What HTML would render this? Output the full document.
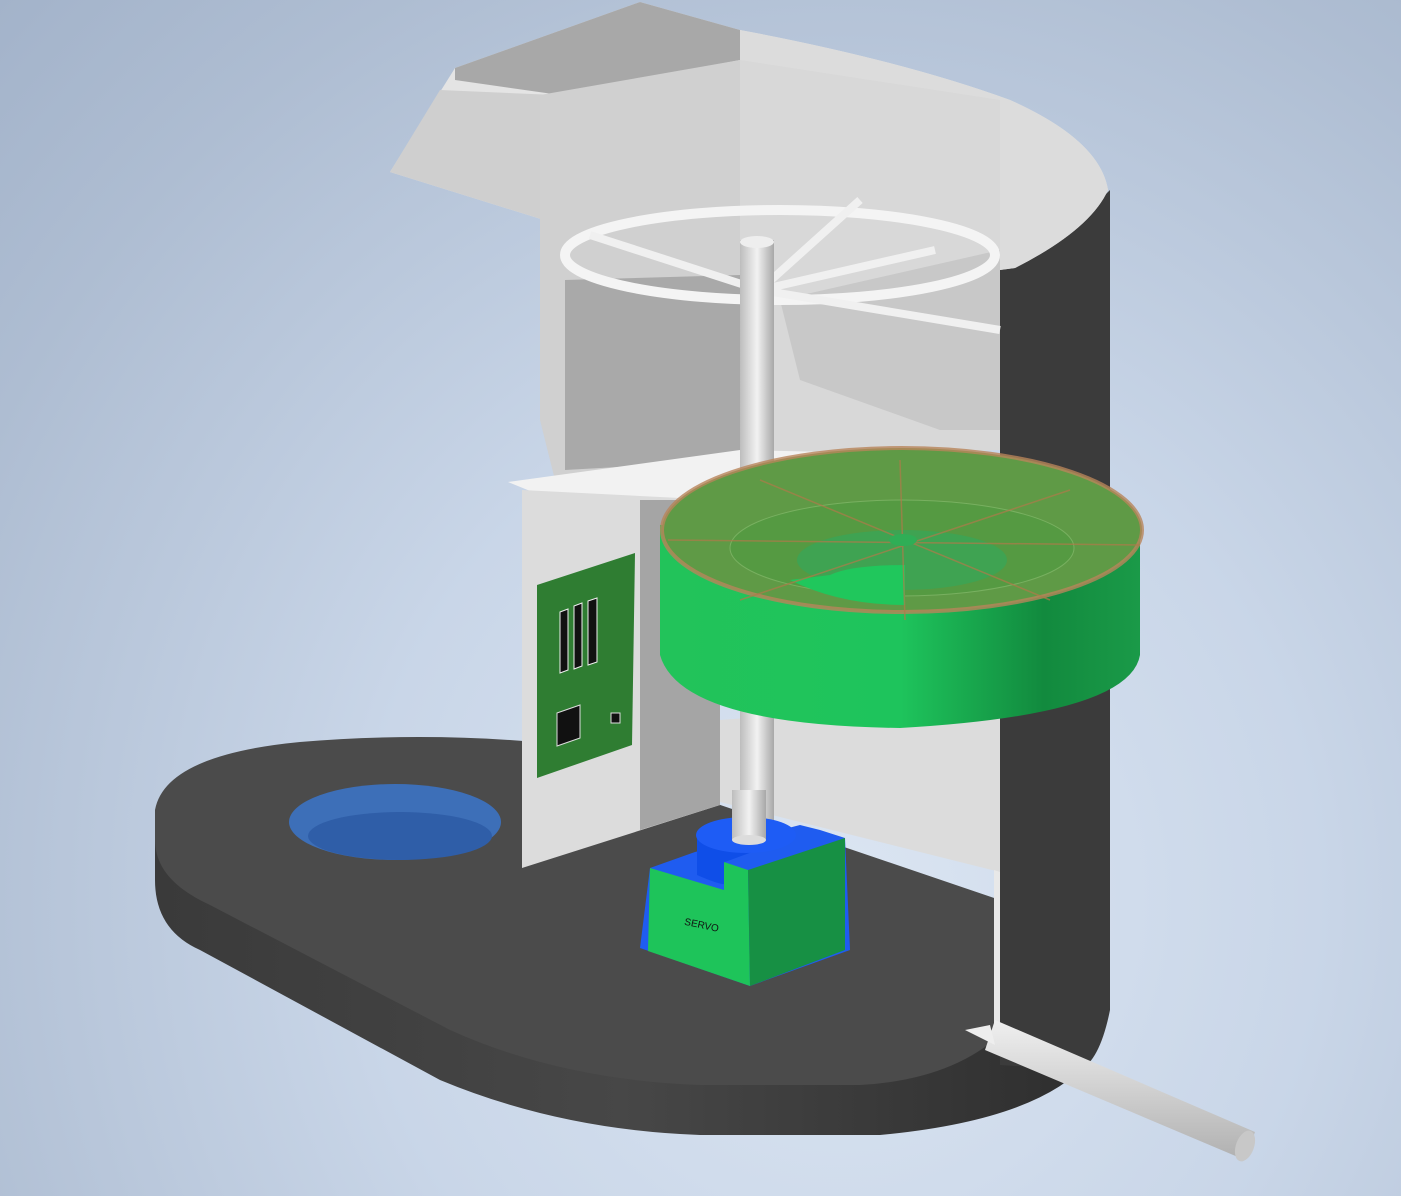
<!DOCTYPE html>
<html><head><meta charset="utf-8"><style>
html,body{margin:0;padding:0;width:1401px;height:1196px;overflow:hidden;}
body{background:radial-gradient(ellipse at 60% 75%,#dbe5f2 0%,#c9d6e8 40%,#aebdd2 80%,#a3b3ca 100%);}
svg{position:absolute;left:0;top:0}
</style></head><body>
<svg width="1401" height="1196" viewBox="0 0 1401 1196" xmlns="http://www.w3.org/2000/svg">
<defs>
<linearGradient id="grn" x1="0" x2="1"><stop offset="0" stop-color="#22c35a"/><stop offset="0.5" stop-color="#1ec45c"/><stop offset="0.8" stop-color="#128a3e"/><stop offset="1" stop-color="#1a9a48"/></linearGradient>
<linearGradient id="base" x1="0" x2="1"><stop offset="0" stop-color="#3a3a3a"/><stop offset="0.5" stop-color="#474747"/><stop offset="1" stop-color="#2e2e2e"/></linearGradient>
<linearGradient id="rod" x1="0" x2="1"><stop offset="0" stop-color="#bdbdbd"/><stop offset="0.5" stop-color="#f2f2f2"/><stop offset="1" stop-color="#a8a8a8"/></linearGradient>
<linearGradient id="pipe" x1="0" y1="0" x2="0" y2="1"><stop offset="0" stop-color="#f0f0f0"/><stop offset="1" stop-color="#b0b0b0"/></linearGradient>
</defs>
<path d="M155 815 Q160 760 300 745 Q420 735 530 745 L1090 1000 L1090 1060 Q1040 1120 880 1135 L700 1135 Q560 1130 440 1080 L200 950 Q155 930 155 880 Z" fill="url(#base)"/>
<path d="M155 810 Q165 755 300 742 Q420 732 535 742 L1000 900 L1000 1035 Q950 1080 860 1085 L700 1085 Q560 1080 450 1030 L210 905 Q155 880 155 840 Z" fill="#4b4b4b"/>
<path d="M1015 265 Q1060 240 1100 200 L1110 190 L1110 1010 Q1100 1060 1080 1070 L1000 1065 L1000 265 Z" fill="#3b3b3b"/>
<path d="M390 172 L455 68 L640 2 L740 30 Q900 60 1010 100 Q1100 140 1108 190 Q1090 230 1015 268 L1000 270 L560 225 Z" fill="#e4e4e4"/>
<path d="M740 30 Q900 60 1010 100 Q1100 140 1108 190 Q1090 230 1015 268 L1000 270 L740 240 Z" fill="#dcdcdc"/>
<path d="M455 68 L640 2 L740 30 L740 60 L560 95 L455 80 Z" fill="#a8a8a8"/>
<path d="M390 172 L440 90 L555 95 L560 225 Z" fill="#cfcfcf"/>
<path d="M540 95 L740 60 L740 470 L555 480 L540 420 Z" fill="#d0d0d0"/>
<path d="M565 280 L740 275 L740 460 L565 470 Z" fill="#a9a9a9"/>
<path d="M740 60 L1000 100 L1000 450 L740 460 Z" fill="#d8d8d8"/>
<path d="M780 300 L1000 250 L1000 430 L940 430 L800 380 Z" fill="#c8c8c8"/>
<ellipse cx="780" cy="255" rx="215" ry="45" fill="none" stroke="#f4f4f4" stroke-width="10"/>
<path d="M590 235 L760 290 L935 250 M760 290 L1000 330 M760 290 L860 200" stroke="#f0f0f0" stroke-width="8" fill="none"/>
<path d="M508 482 L740 450 L960 455 L960 470 L740 500 L540 495 Z" fill="#f2f2f2"/>
<path d="M522 490 L720 500 L720 805 L522 868 Z" fill="#dcdcdc"/>
<path d="M640 500 L720 500 L720 805 L640 830 Z" fill="#a5a5a5"/>
<!-- lower right wall -->
<path d="M720 720 L1000 700 L1000 872 L720 802 Z" fill="#dcdcdc"/>
<path d="M994 870 L1000 872 L1000 1040 L994 1040 Z" fill="#e8e8e8"/>
<path d="M537 585 L635 553 L632 745 L537 778 Z" fill="#2f7d32"/>
<path d="M560 612 L568 609 L568 670 L560 673 Z M574 606 L582 603 L582 666 L574 669 Z M588 601 L597 598 L597 662 L588 665 Z" fill="#111" stroke="#eee" stroke-width="1"/>
<path d="M557 713 L580 705 L580 738 L557 746 Z" fill="#111" stroke="#ddd" stroke-width="1"/>
<rect x="611" y="713" width="9" height="10" fill="#111" stroke="#ddd"/>
<ellipse cx="395" cy="822" rx="106" ry="38" fill="#3d6fb8"/>
<ellipse cx="400" cy="836" rx="92" ry="24" fill="#2f5ea8"/>
<rect x="740" y="240" width="34" height="600" fill="url(#rod)"/>
<ellipse cx="757" cy="242" rx="17" ry="6" fill="#eee"/>
<!-- servo -->
<path d="M640 948 L650 868 L695 852 L800 825 L820 830 L845 838 L850 950 L750 986 Z" fill="#1f5cf0"/>
<path d="M697 838 L697 875 Q720 885 725 884 L725 862 L790 838 Z" fill="#0f4ee8"/>
<ellipse cx="746" cy="835" rx="50" ry="18" fill="#1e5cf5"/>
<rect x="732" y="790" width="34" height="50" fill="url(#rod)"/>
<ellipse cx="749" cy="840" rx="17" ry="5" fill="#dcdcdc"/>
<path d="M650 868 L724 890 L724 862 L748 870 L750 986 L648 951 Z" fill="#1ec45a"/>
<path d="M748 870 L845 838 L845 950 L750 986 Z" fill="#179044"/>
<text x="684" y="928" font-family="Liberation Sans, sans-serif" font-size="10" fill="#111" transform="rotate(12 700 926)">SERVO</text>
<path d="M660 525 L660 655 Q680 725 900 728 Q1130 715 1140 655 L1140 525 Z" fill="url(#grn)"/>
<ellipse cx="902" cy="530" rx="240" ry="82" fill="#5f9a46"/>
<ellipse cx="902" cy="530" rx="240" ry="82" fill="none" stroke="#b8845a" stroke-width="4" opacity="0.8"/>
<ellipse cx="902" cy="548" rx="172" ry="48" fill="#559a42" stroke="#78b060"/>
<ellipse cx="902" cy="560" rx="105" ry="30" fill="#3fa352"/>
<path d="M790 580 Q840 605 905 605 L905 565 Q850 565 830 575 Z" fill="#20c75c"/>
<path d="M668 540 L1140 545 M760 480 L1050 600 M900 460 L905 620 M1070 490 L740 600" stroke="#b07a4a" stroke-width="1.5" opacity="0.7"/>
<ellipse cx="903" cy="540" rx="14" ry="6" fill="#2fae56"/>
<path d="M985 1050 L1245 1160 L1255 1132 L995 1020 Z" fill="url(#pipe)"/>
<ellipse cx="1245" cy="1146" rx="9" ry="16" fill="#c8c8c8" transform="rotate(20 1245 1146)"/>
<path d="M965 1030 L990 1025 L995 1045 Z" fill="#eee"/>
</svg>
</body></html>
